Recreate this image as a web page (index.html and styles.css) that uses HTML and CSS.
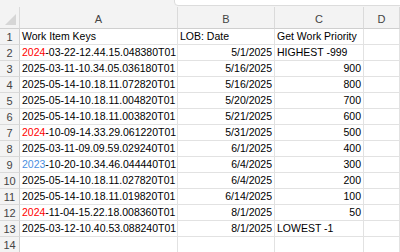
FILE: index.html
```html
<!DOCTYPE html>
<html lang="en">
<head>
  <meta charset="UTF-8" />
  <title>Work Items</title>
  <link rel="stylesheet" href="styles.css">
</head>
<body>
  <div class="topbar">
    <div class="formula-box"></div>
  </div>

  <div class="sheet">
    <div class="corner">
      <svg class="corner-tri" width="11" height="11" viewBox="0 0 11 11">
        <polygon points="11,0 11,11 0,11" fill="#d6d6d6" />
      </svg>
    </div>
    <div class="col-head">A</div>
    <div class="col-head">B</div>
    <div class="col-head">C</div>
    <div class="col-head">D</div>

    <div class="row-head">1</div>
    <div class="cell">Work Item Keys</div>
    <div class="cell">LOB: Date</div>
    <div class="cell">Get Work Priority</div>
    <div class="cell"></div>

    <div class="row-head">2</div>
    <div class="cell"><span class="red">2024</span>-03-22-12.44.15.048380T01</div>
    <div class="cell num">5/1/2025</div>
    <div class="cell">HIGHEST -999</div>
    <div class="cell"></div>

    <div class="row-head">3</div>
    <div class="cell">2025-03-11-10.34.05.036180T01</div>
    <div class="cell num">5/16/2025</div>
    <div class="cell num">900</div>
    <div class="cell"></div>

    <div class="row-head">4</div>
    <div class="cell">2025-05-14-10.18.11.072820T01</div>
    <div class="cell num">5/16/2025</div>
    <div class="cell num">800</div>
    <div class="cell"></div>

    <div class="row-head">5</div>
    <div class="cell">2025-05-14-10.18.11.004820T01</div>
    <div class="cell num">5/20/2025</div>
    <div class="cell num">700</div>
    <div class="cell"></div>

    <div class="row-head">6</div>
    <div class="cell">2025-05-14-10.18.11.003820T01</div>
    <div class="cell num">5/21/2025</div>
    <div class="cell num">600</div>
    <div class="cell"></div>

    <div class="row-head">7</div>
    <div class="cell"><span class="red">2024</span>-10-09-14.33.29.061220T01</div>
    <div class="cell num">5/31/2025</div>
    <div class="cell num">500</div>
    <div class="cell"></div>

    <div class="row-head">8</div>
    <div class="cell">2025-03-11-09.09.59.029240T01</div>
    <div class="cell num">6/1/2025</div>
    <div class="cell num">400</div>
    <div class="cell"></div>

    <div class="row-head">9</div>
    <div class="cell"><span class="blue">2023</span>-10-20-10.34.46.044440T01</div>
    <div class="cell num">6/4/2025</div>
    <div class="cell num">300</div>
    <div class="cell"></div>

    <div class="row-head">10</div>
    <div class="cell">2025-05-14-10.18.11.027820T01</div>
    <div class="cell num">6/4/2025</div>
    <div class="cell num">200</div>
    <div class="cell"></div>

    <div class="row-head">11</div>
    <div class="cell">2025-05-14-10.18.11.019820T01</div>
    <div class="cell num">6/14/2025</div>
    <div class="cell num">100</div>
    <div class="cell"></div>

    <div class="row-head">12</div>
    <div class="cell"><span class="red">2024</span>-11-04-15.22.18.008360T01</div>
    <div class="cell num">8/1/2025</div>
    <div class="cell num">50</div>
    <div class="cell"></div>

    <div class="row-head">13</div>
    <div class="cell">2025-03-12-10.40.53.088240T01</div>
    <div class="cell num">8/1/2025</div>
    <div class="cell">LOWEST -1</div>
    <div class="cell"></div>

    <div class="row-head">14</div>
    <div class="cell"></div>
    <div class="cell"></div>
    <div class="cell"></div>
    <div class="cell"></div>
  </div>
</body>
</html>
```

FILE: styles.css
```css
* {
  margin: 0;
  padding: 0;
  box-sizing: border-box;
}
body {
  font-family: 'Liberation Sans', Arial, sans-serif;
  background: #fff;
  color: #000;
  overflow: hidden;
}
.topbar {
  height: 7px;
  background: #f3f3f3;
  position: relative;
  overflow: hidden;
}
.formula-box {
  position: absolute;
  left: 174px;
  right: -4px;
  top: -4px;
  height: 10px;
  background: #fff;
  border: 1px solid #dcdcdc;
  border-radius: 4px;
}
.sheet {
  display: grid;
  grid-template-columns: 20px 158px 97px 89px minmax(0, 1fr);
  grid-template-rows: 22px;
  grid-auto-rows: 16px;
}
.corner {
  background: #f3f3f3;
  border-right: 1px solid #dadada;
  border-bottom: 1px solid #cfcfcf;
  position: relative;
}
.corner-tri {
  position: absolute;
  right: 3px;
  bottom: 3px;
}
.col-head {
  background: #f3f3f3;
  border-right: 1px solid #dadada;
  border-bottom: 1px solid #cfcfcf;
  font-size: 11px;
  color: #444;
  display: flex;
  align-items: center;
  justify-content: center;
  padding-top: 2px;
}
.row-head {
  background: #f3f3f3;
  border-right: 1px solid #cfcfcf;
  border-bottom: 1px solid #dadada;
  font-size: 11px;
  color: #444;
  display: flex;
  align-items: center;
  justify-content: center;
}
.cell {
  border-right: 1px solid #e2e2e2;
  border-bottom: 1px solid #e2e2e2;
  font-size: 10.5px;
  line-height: 15px;
  padding: 0 2px;
  white-space: nowrap;
  overflow: hidden;
}
.num {
  text-align: right;
}
.red {
  color: #ff0000;
}
.blue {
  color: #4a8fe0;
}
```
